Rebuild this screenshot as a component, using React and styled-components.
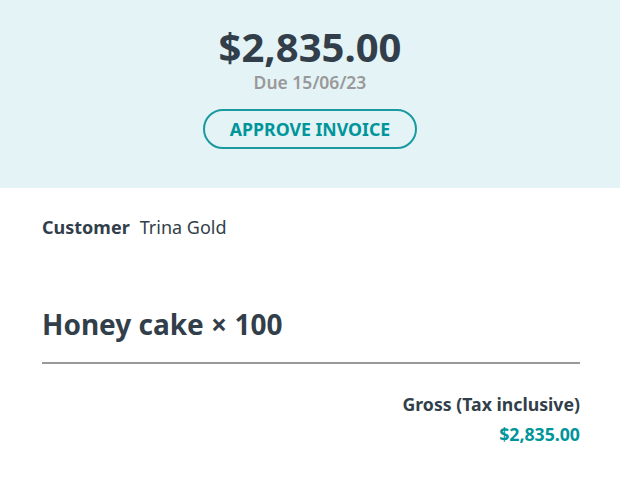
import React from 'react';
import styled, { createGlobalStyle } from 'styled-components';

const Global = createGlobalStyle`
  body {
    margin: 0;
    font-family: "Noto Sans", "Open Sans", sans-serif;
    color: #323f4b;
    background: #fff;
  }
`;

const Header = styled.div`
  background-color: #e4f3f5;
  height: 188px;
  display: flex;
  flex-direction: column;
  align-items: center;
  padding-top: 25px;
  box-sizing: border-box;
`;

const Amount = styled.div`
  font-size: 40px;
  font-weight: 700;
  line-height: 44px;
  color: #323f4b;
`;

const Due = styled.div`
  font-size: 17.5px;
  font-weight: 600;
  color: #999;
  line-height: 24px;
  margin-top: 1px;
`;

const ApproveButton = styled.button`
  margin-top: 15px;
  width: 214px;
  height: 40px;
  border: 2px solid #1a9aa0;
  border-radius: 20px;
  background: transparent;
  color: #00959a;
  font-family: inherit;
  font-size: 17.7px;
  font-weight: 700;
  cursor: pointer;
`;

const Body = styled.div`
  padding: 24px 40px 0 42px;
`;

const CustomerRow = styled.div`
  font-size: 18px;
  line-height: 30px;
  display: flex;
  gap: 10px;
`;

const Label = styled.span`
  font-weight: 700;
`;

const ItemTitle = styled.h2`
  margin: 62px 0 0;
  font-size: 28px;
  font-weight: 700;
  line-height: 40px;
`;

const Divider = styled.hr`
  margin: 18px 0 0;
  border: none;
  border-top: 2px solid #999;
`;

const Totals = styled.div`
  display: flex;
  flex-direction: column;
  align-items: flex-end;
  margin-top: 25px;
`;

const TotalLabel = styled.div`
  font-size: 17.7px;
  font-weight: 700;
  line-height: 30px;
`;

const TotalValue = styled.div`
  font-size: 17.7px;
  font-weight: 700;
  line-height: 30px;
  color: #00959a;
`;

export default function App() {
  return (
    <>
      <Global />
      <Header>
        <Amount>$2,835.00</Amount>
        <Due>Due 15/06/23</Due>
        <ApproveButton>APPROVE INVOICE</ApproveButton>
      </Header>
      <Body>
        <CustomerRow>
          <Label>Customer</Label>
          <span>Trina Gold</span>
        </CustomerRow>
        <ItemTitle>Honey cake × 100</ItemTitle>
        <Divider />
        <Totals>
          <TotalLabel>Gross (Tax inclusive)</TotalLabel>
          <TotalValue>$2,835.00</TotalValue>
        </Totals>
      </Body>
    </>
  );
}
